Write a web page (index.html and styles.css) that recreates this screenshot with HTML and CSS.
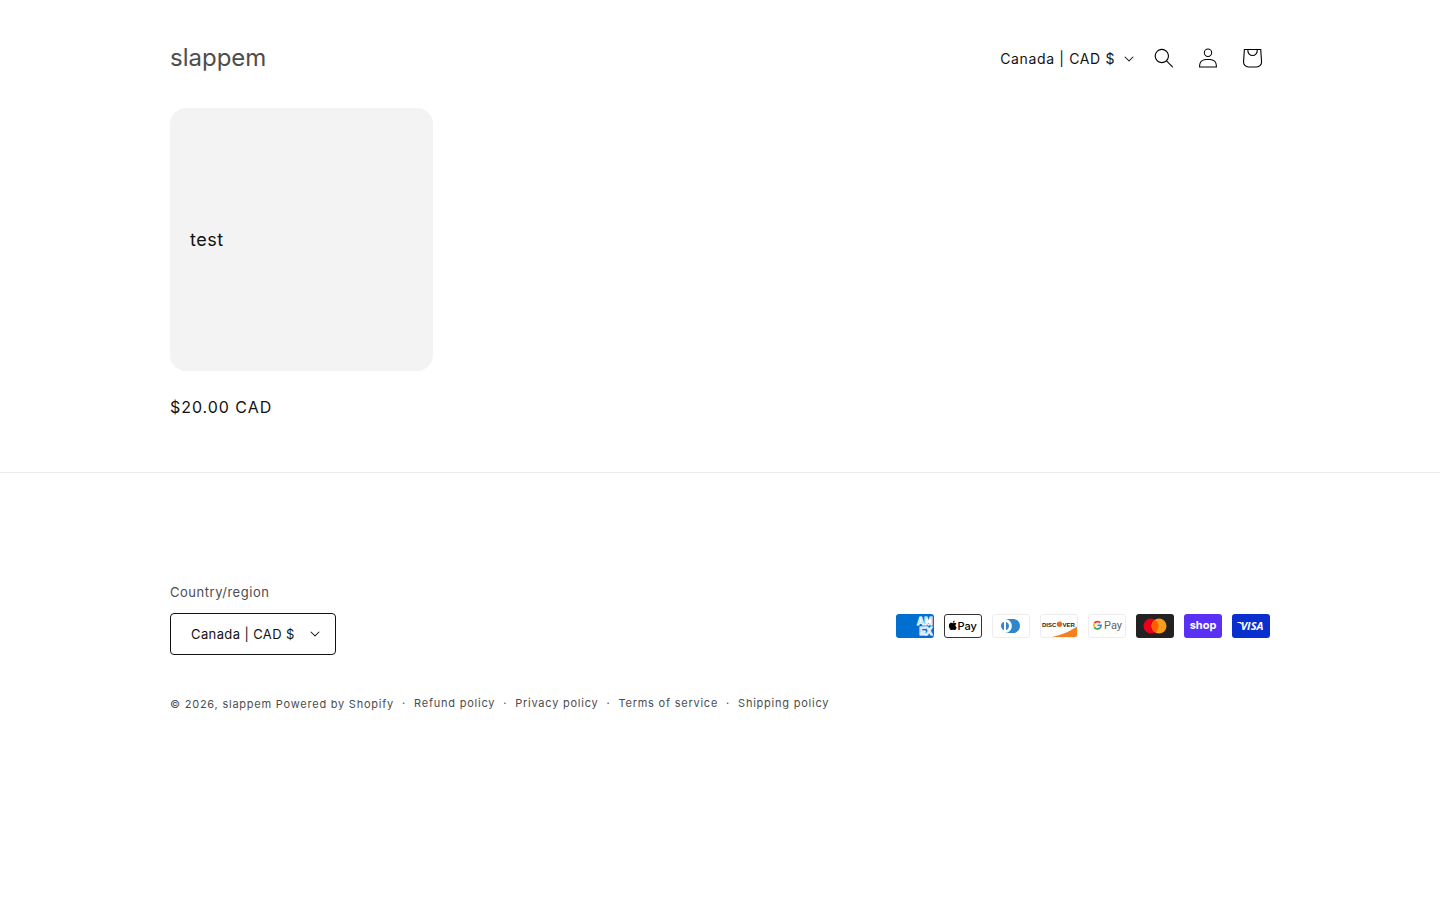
FILE: index.html
```html
<!DOCTYPE html>
<html lang="en">
<head>
<meta charset="utf-8">
<meta name="viewport" content="width=device-width, initial-scale=1">
<title>slappem</title>
<link rel="stylesheet" href="styles.css">
</head>
<body>
<header class="header page-width">
  <a class="logo" href="#">slappem</a>
  <div class="header-tools">
    <button class="region region-header" type="button" aria-label="Country/region: Canada | CAD $"><span>Canada | CAD $</span>
      <svg class="caret" viewBox="0 0 10 6" aria-hidden="true"><path d="M9.354.646a.5.5 0 00-.708 0L5 4.293 1.354.646a.5.5 0 00-.708.708l4 4a.5.5 0 00.708 0l4-4a.5.5 0 000-.708z"/></svg>
    </button>
    <button class="icon-link" type="button" aria-label="Search">
      <svg class="icon" viewBox="0 0 18 19"><path fill-rule="evenodd" d="M11.03 11.68A5.784 5.784 0 112.85 3.5a5.784 5.784 0 018.18 8.18zm.26 1.12a6.78 6.78 0 11.72-.7l5.4 5.4a.5.5 0 11-.71.7l-5.41-5.4z"/></svg>
    </button>
    <a class="icon-link" href="#" aria-label="Log in">
      <svg class="icon" viewBox="0 0 18 19"><path fill-rule="evenodd" d="M6 4.5a3 3 0 116 0 3 3 0 01-6 0zm3-4a4 4 0 100 8 4 4 0 000-8zm5.58 12.15c1.12.82 1.83 2.24 1.91 4.85H1.51c.08-2.6.79-4.03 1.9-4.85C4.66 11.75 6.5 11.5 9 11.5s4.35.26 5.58 1.15zM9 10.5c-2.5 0-4.65.24-6.17 1.35C1.27 12.98.5 14.93.5 18v.5h17V18c0-3.07-.77-5.02-2.33-6.15-1.52-1.1-3.67-1.35-6.17-1.35z"/></svg>
    </a>
    <a class="icon-link" href="#" aria-label="Cart">
      <svg class="icon-cart" viewBox="0 0 40 40"><path fill-rule="evenodd" d="M15.75 11.8h-3.16l-.77 11.6a5 5 0 004.99 5.34h7.38a5 5 0 004.99-5.33L28.4 11.8zm0 1h-2.22l-.71 10.67a4 4 0 003.99 4.27h7.38a4 4 0 004-4.27l-.72-10.67h-2.22v.63a4.75 4.75 0 11-9.5 0zm8.5 0h-7.5v.63a3.75 3.75 0 107.5 0z"/></svg>
    </a>
  </div>
</header>

<main class="page-width product-grid">
  <article class="product">
    <a class="product-card" href="#"><h3 class="product-name">test</h3></a>
    <p class="price">$20.00 CAD</p>
  </article>
</main>

<footer class="footer">
  <div class="page-width">
    <div class="footer-row">
      <div class="footer-region">
        <h2 class="region-label" id="region-label">Country/region</h2>
        <button class="region region-footer" type="button" aria-describedby="region-label"><span>Canada | CAD $</span>
          <svg class="caret" viewBox="0 0 10 6" aria-hidden="true"><path d="M9.354.646a.5.5 0 00-.708 0L5 4.293 1.354.646a.5.5 0 00-.708.708l4 4a.5.5 0 00.708 0l4-4a.5.5 0 000-.708z"/></svg>
        </button>
      </div>
      <ul class="payments" aria-label="Payment methods">
        <li><svg class="pay" viewBox="0 0 38 24" role="img" aria-label="American Express"><rect width="38" height="24" rx="3" fill="#006fcf"/><g class="amex"><text x="36.500" y="11">AM</text><text x="36.500" y="21">EX</text></g></svg></li>
        <li><svg class="pay" viewBox="0 0 38 24" role="img" aria-label="Apple Pay"><rect x=".5" y=".5" width="37" height="23" rx="2.5" fill="#fff" stroke="#333"/><path transform="translate(4 6.5) scale(.4)" d="M12.152 6.896c-.948 0-2.415-1.078-3.96-1.04-2.04.027-3.91 1.183-4.961 3.014-2.117 3.675-.546 9.103 1.519 12.09 1.013 1.454 2.208 3.09 3.792 3.039 1.52-.065 2.09-.987 3.935-.987 1.831 0 2.35.987 3.96.948 1.637-.026 2.676-1.48 3.676-2.948 1.156-1.688 1.636-3.325 1.662-3.415-.039-.013-3.182-1.221-3.22-4.857-.026-3.04 2.48-4.494 2.597-4.559-1.429-2.09-3.623-2.324-4.39-2.376-2-.156-3.675 1.09-4.61 1.09zM15.53 3.83c.843-1.012 1.4-2.427 1.245-3.83-1.207.052-2.662.805-3.532 1.818-.78.896-1.454 2.338-1.273 3.714 1.338.104 2.715-.688 3.559-1.701"/><text class="apple-word" x="13.5" y="16">Pay</text></svg></li>
        <li><svg class="pay" viewBox="0 0 38 24" role="img" aria-label="Diners Club"><rect x=".5" y=".5" width="37" height="23" rx="2.5" fill="#fff" stroke="#ededed"/><path d="M12 12v3.7c0 .3-.2.3-.5.2-1.9-.8-3-3.3-2.3-5.4.4-1.1 1.2-2 2.3-2.4.4-.2.5-.1.5.2V12zm2 0V8.3c0-.3 0-.3.3-.2 2.1.8 3.2 3.3 2.4 5.4-.4 1.1-1.2 2-2.3 2.4-.4.2-.4.1-.4-.2V12zm7.2-7H13c3.8 0 6.8 3.1 6.8 7s-3 7-6.8 7h8.2c3.8 0 6.8-3.1 6.8-7s-3-7-6.8-7z" fill="#3086c8"/></svg></li>
        <li><svg class="pay" viewBox="0 0 38 24" role="img" aria-label="Discover"><path d="M37 12.5C30 17.5 20 21.5 9 23.5h26a2 2 0 002-2z" fill="#f48120"/><rect x=".5" y=".5" width="37" height="23" rx="2.5" fill="none" stroke="#ededed"/><text class="discover" x="2" y="12.500">DISC</text><circle cx="19.500" cy="10.300" r="2.700" fill="#e66b22"/><text class="discover" x="22.500" y="12.500">VER</text></svg></li>
        <li><svg class="pay" viewBox="0 0 38 24" role="img" aria-label="Google Pay"><rect x=".5" y=".5" width="37" height="23" rx="2.5" fill="#fff" stroke="#ededed"/><g fill="none" stroke-width="1.7"><path d="M12.2 8.8A3.7 3.7 0 006.4 9.3" stroke="#ea4335"/><path d="M6.4 9.3a3.7 3.7 0 000 3.9" stroke="#fbbc04"/><path d="M6.4 13.2a3.7 3.7 0 005.7.7" stroke="#34a853"/><path d="M12.1 13.9c.8-.7 1.1-1.5 1-2.5H9.5" stroke="#4285f4"/></g><text class="google-word" x="16" y="15">Pay</text></svg></li>
        <li><svg class="pay" viewBox="0 0 38 24" role="img" aria-label="Mastercard"><rect width="38" height="24" rx="3" fill="#222"/><circle cx="15" cy="12" r="7.5" fill="#eb001b"/><circle cx="23" cy="12" r="7.5" fill="#f79e1b"/><path d="M19 5.65a7.5 7.5 0 010 12.7 7.5 7.5 0 010-12.7z" fill="#ff5f00"/></svg></li>
        <li><svg class="pay" viewBox="0 0 38 24" role="img" aria-label="Shop Pay"><rect width="38" height="24" rx="3" fill="#5a31f4"/><text class="shop-word" x="19" y="15">shop</text></svg></li>
        <li><svg class="pay" viewBox="0 0 38 24" role="img" aria-label="Visa"><rect width="38" height="24" rx="3" fill="#0a2fce"/><text class="visa-word" x="20" y="16">VISA</text><path d="M5 8h4l2 4c-1-2-3-3-6-3.5z" fill="#fff"/></svg></li>
      </ul>
    </div>
    <div class="legal">
      <small class="copyright">© 2026, <a href="#">slappem</a> <a href="#">Powered by Shopify</a></small>
      <ul class="policies">
        <li><a href="#">Refund policy</a></li>
        <li><a href="#">Privacy policy</a></li>
        <li><a href="#">Terms of service</a></li>
        <li><a href="#">Shipping policy</a></li>
      </ul>
    </div>
  </div>
</footer>
</body>
</html>
```
FILE: styles.css
```css
*, *::before, *::after { box-sizing: border-box; }
body {
  margin: 0;
  background: #fff;
  color: #121212;
  font: 16px/28px Inter, "Liberation Sans", sans-serif;
  letter-spacing: 0.04em;
}
a { color: inherit; text-decoration: none; }
ul { list-style: none; margin: 0; padding: 0; }
h2, h3, p { margin: 0; font-weight: 400; }
button { font: inherit; color: inherit; background: none; border: 0; padding: 0; cursor: pointer; letter-spacing: inherit; }
.page-width { max-width: 1200px; margin: 0 auto; padding-left: 50px; padding-right: 50px; }

.header { display: flex; align-items: center; justify-content: space-between; padding-top: 36px; padding-bottom: 28px; }
.logo { font-size: 24px; line-height: 32px; letter-spacing: 0; color: #4d4d4d; }
.header-tools { display: flex; align-items: center; margin-right: -4px; }
.region { display: flex; align-items: center; }
.region-header { gap: 9px; height: 44px; padding: 2px 8px 0 0; font-size: 14px; }
.caret { width: 10px; height: 6px; fill: currentColor; }
.icon-link { display: flex; align-items: center; justify-content: center; width: 44px; height: 44px; }
.icon { width: 20px; height: 20px; }
.icon-cart { width: 44px; height: 44px; }

.product-grid { display: grid; grid-template-columns: repeat(4, 1fr); gap: 16px; padding-bottom: 52px; }
.product-card { display: flex; align-items: center; aspect-ratio: 1; padding: 20px; border-radius: 16px; background: #f3f3f3; }
.product-name { font-size: 18px; line-height: 24px; letter-spacing: 0.03em; }
.price { margin-top: 23px; line-height: 26px; letter-spacing: 0.06em; }

.footer { border-top: 1px solid #ebebeb; padding: 107px 0 24px; }
.footer-row { display: flex; flex-wrap: wrap; align-items: flex-end; justify-content: space-between; }
.region-label { font-size: 13px; line-height: 24px; color: #4d4d4d; margin-bottom: 9px; letter-spacing: 0.04em; }
.region-footer { gap: 15px; padding: 0 15px 1px 20px; height: 42px; font-size: 13px; letter-spacing: 0.03em; border: 1px solid #121212; border-radius: 4px; }
.payments { display: flex; flex-wrap: wrap; gap: 10px; padding-bottom: 17px; }
.payments li { display: flex; }
.pay { width: 38px; height: 24px; letter-spacing: 0; }
.amex { fill: #006fcf; stroke: #fff; stroke-width: 1px; font: 700 10px "Liberation Sans", sans-serif; text-anchor: end; }
.apple-word { font: 500 11px Inter, sans-serif; }
.discover { font: 700 6px "Liberation Sans", sans-serif; fill: #231f20; }
.google-word { font: 400 11px Roboto, sans-serif; fill: #5f6368; }
.shop-word { font: 700 11px Inter, sans-serif; fill: #fff; text-anchor: middle; }
.visa-word { font: italic 700 11px "Open Sans", sans-serif; fill: #fff; text-anchor: middle; }

.legal { display: flex; flex-wrap: wrap; align-items: center; margin-top: 36px; font-size: 11px; line-height: 22px; letter-spacing: 0.07em; color: #4d4d4d; }
.copyright { font-size: 11px; padding-top: 2px; }
.policies { display: flex; flex-wrap: wrap; }
.policies li::before { content: "·"; padding: 0 8px; }
```
